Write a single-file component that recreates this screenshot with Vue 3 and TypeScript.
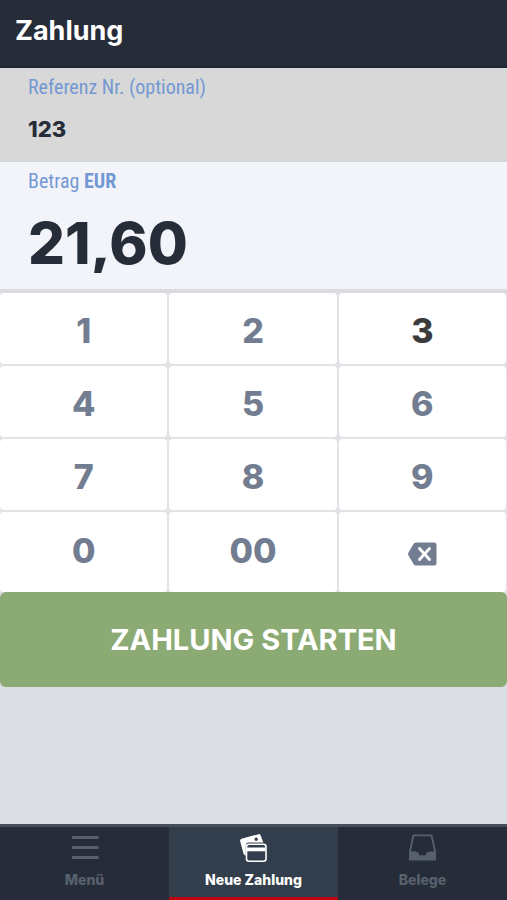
<script setup lang="ts">
import { ref } from 'vue'

type Key = { value: string; label: string }
type Tab = 'menu' | 'payment' | 'receipts'

const keys: Key[] = [
  ...['1', '2', '3', '4', '5', '6', '7', '8', '9', '0', '00'].map((k) => ({ value: k, label: k })),
  { value: 'back', label: 'Löschen' },
]

const reference = ref('123')
const amount = ref('21,60')
const pressedKey = ref('3')
const activeTab = ref<Tab>('payment')

function press(key: string): void {
  pressedKey.value = key
  const digits = amount.value.replace(/\D/g, '')
  const next = key === 'back' ? digits.slice(0, -1) : digits + key
  const cents = next.replace(/^0+/, '').slice(0, 7).padStart(3, '0')
  amount.value = `${cents.slice(0, -2)},${cents.slice(-2)}`
}
</script>

<template>
  <div class="app">
    <header class="header">
      <h1>Zahlung</h1>
    </header>

    <main class="main">
      <div class="field field-reference">
        <label for="reference">Referenz Nr. (optional)</label>
        <input id="reference" v-model="reference" type="text" />
      </div>
      <div class="field field-amount">
        <label for="amount">Betrag <b>EUR</b></label>
        <input id="amount" :value="amount" type="text" readonly />
      </div>

      <div class="keypad">
        <button
          v-for="key in keys"
          :key="key.value"
          type="button"
          class="key"
          :class="{ pressed: pressedKey === key.value }"
          :aria-label="key.label"
          @click="press(key.value)"
        >
          <svg v-if="key.value === 'back'" class="back-icon" viewBox="0 0 30 24" aria-hidden="true">
            <path d="M9 0.5H27Q29.500 0.5 29.500 3V21Q29.500 23.5 27 23.5H9Q7.500 23.500 6.500 22L1.500 13.500Q.5 12 1.500 10.500L6.500 2Q7.500 .5 9 .5Z" fill="currentColor" />
            <path d="M12.500 6.500L22.500 17.500M22.500 6.500L12.500 17.500" stroke="#fff" stroke-width="2.800" stroke-linecap="round" />
          </svg>
          <template v-else>{{ key.label }}</template>
        </button>
      </div>

      <button type="button" class="start">ZAHLUNG STARTEN</button>
    </main>

    <nav class="tabs">
      <button type="button" class="tab" :class="{ active: activeTab === 'menu' }" @click="activeTab = 'menu'">
        <svg class="tab-icon" viewBox="0 0 30 30" aria-hidden="true">
          <path d="M2 3.500H28.500M2 13.500H28.500M2 23.500H28.500" stroke="currentColor" stroke-width="3" />
        </svg>
        <span>Menü</span>
      </button>
      <button type="button" class="tab" :class="{ active: activeTab === 'payment' }" @click="activeTab = 'payment'">
        <svg class="tab-icon" viewBox="0 0 30 30" aria-hidden="true">
          <path
            fill-rule="evenodd"
            d="M2.500 4.700L19.500 0.200Q21 -.2 21.600 1.200L24.300 8.600H10Q6.800 8.600 6.800 11.500V21.500Q5 21.500 4.500 19.500L1.200 7.500Q.7 5.300 2.500 4.700ZM17.200 3.500A1.700 1.700 0 1 0 17.200 6.900A1.700 1.700 0 1 0 17.200 3.500Z"
            fill="currentColor"
          />
          <rect x="7.500" y="10.300" width="19.500" height="17" rx="2.500" fill="none" stroke="currentColor" stroke-width="1.600" />
          <path d="M8 13.500H26.500V17.300H8Z" fill="currentColor" />
        </svg>
        <span>Neue Zahlung</span>
      </button>
      <button type="button" class="tab" :class="{ active: activeTab === 'receipts' }" @click="activeTab = 'receipts'">
        <svg class="tab-icon" viewBox="0 0 30 30" aria-hidden="true">
          <path d="M1.900 18L5.500 1.300H23.500L27.100 18" fill="none" stroke="currentColor" stroke-width="1.800" stroke-linejoin="round" />
          <path d="M1 17.500H8.500V18.500H11V21.300H18V18.500H20.500V17.500H28V26.500H1Z" fill="currentColor" />
        </svg>
        <span>Belege</span>
      </button>
    </nav>
  </div>
</template>

<style>
body {
  margin: 0;
}
</style>

<style scoped>
.app {
  display: flex;
  flex-direction: column;
  min-height: 100vh;
  background: #dadde2;
  font-family: Inter, 'Liberation Sans', sans-serif;
}

.app * {
  box-sizing: border-box;
}

button,
input {
  margin: 0;
  padding: 0;
  border: 0;
  background: none;
  font-family: inherit;
}

button {
  cursor: pointer;
}

.header {
  padding: 14px 15px 18px;
  border-bottom: 2px solid #20262f;
  background: #262d39;
}

h1 {
  margin: 0;
  color: #fff;
  font-size: 27px;
  font-weight: 700;
  line-height: 34px;
}

.main {
  flex: 1;
}

.field {
  display: flex;
  flex-direction: column;
  padding: 7px 28px;
}

.field label {
  color: #7398d4;
  font-family: 'Liberation Sans Narrow', 'Roboto Condensed', 'Open Sans Condensed', sans-serif;
  font-size: 20px;
  line-height: 24px;
}

.field input {
  width: 100%;
  color: #262d39;
  font-weight: 800;
  outline: none;
}

.field-reference {
  height: 94px;
  border-bottom: 2px solid #d4d5d8;
  background: #d8d8d8;
}

.field-reference input {
  height: 24px;
  margin-top: 18px;
  font-size: 22px;
}

.field-amount {
  height: 127px;
  background: #f3f4f9;
}

.field-amount input {
  height: 60px;
  margin-top: 20px;
  font-size: 58px;
}

.keypad {
  display: grid;
  grid-template-columns: repeat(3, 1fr);
  grid-template-rows: repeat(3, 71px) 80px;
  gap: 2px;
  padding-right: 1px;
  border-top: 4px solid #dadce0;
  background: #e1e3e7;
}

.key {
  display: flex;
  align-items: center;
  justify-content: center;
  padding-top: 4px;
  border-radius: 4px;
  background: #fff;
  color: #727d92;
  font-size: 34px;
  font-weight: 800;
}

.key:nth-child(n + 10) {
  padding: 0 0 4px;
}

.key.pressed {
  color: #3b3a3c;
}

.key .back-icon {
  width: 30px;
  height: 24px;
  margin-top: 8px;
}

.start {
  display: block;
  width: 100%;
  height: 95px;
  border-radius: 6px;
  background: #8caa73;
  color: #fff;
  font-size: 29px;
  font-weight: 700;
}

.tabs {
  display: grid;
  grid-template-columns: repeat(3, 1fr);
  border-top: 3px solid #464e59;
  background: #262d39;
}

.tab {
  display: flex;
  flex-direction: column;
  align-items: center;
  gap: 7px;
  height: 73px;
  padding-top: 7px;
  border-bottom: 3px solid transparent;
  color: #57606d;
  font-size: 14px;
  font-weight: 800;
  line-height: 18px;
}

.tab.active {
  border-bottom-color: #bd0410;
  background: #323e4b;
  color: #fff;
}

.tab-icon {
  width: 30px;
  height: 30px;
  overflow: visible;
}
</style>
